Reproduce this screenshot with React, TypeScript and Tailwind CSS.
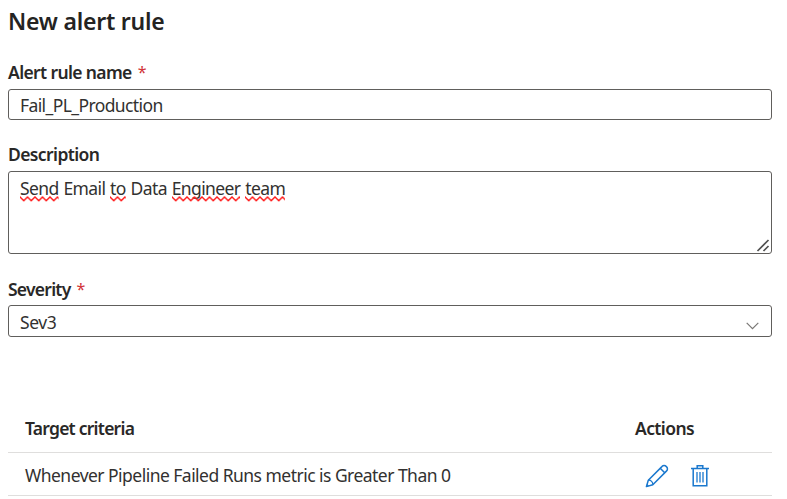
import React from "react";

function Squiggle({ text, className = "" }: { text: string; className?: string }) {
  const id = "wave-" + text;
  return (
    <span className={"relative inline-block " + className}>
      {text}
      <svg className="absolute left-0 top-[20px] h-[6px] w-full" aria-hidden="true">
        <defs>
          <pattern id={id} width="7.5" height="6" patternUnits="userSpaceOnUse">
            <path d="M-1 0 L0 1 L3.75 4.7 L7.5 1 L8.5 0" fill="none" stroke="#ff1a1a" strokeWidth="1.5" />
          </pattern>
        </defs>
        <rect width="100%" height="6" fill={`url(#${id})`} />
      </svg>
    </span>
  );
}

function Label({ text, required, className }: { text: string; required?: boolean; className: string }) {
  return (
    <div className="flex h-6 items-center whitespace-pre pb-[2px] font-semibold text-[#292827]">
      <span className={className}>{text}</span>
      {required && <span className="ml-[6px] text-[16px] font-normal text-[#d13438]">*</span>}
    </div>
  );
}

function PencilIcon() {
  return (
    <svg width="24" height="24" viewBox="0 0 24 24" fill="none" stroke="#1a78ce" strokeWidth="1.5" strokeLinejoin="round">
      <path d="M1.4 22.6 L3.3 16.2 L16.9 2.6 C18.2 1.2 20 1.2 21.4 2.6 C22.8 4 22.8 5.8 21.4 7.1 L7.8 20.7 Z" />
      <path d="M15.2 4.3 L19.7 8.8" />
      <path d="M3.3 16.2 C5.8 15.9 8.1 18.2 7.8 20.7 M1.9 20.5 L3.5 22.1" strokeWidth="1.3" />
    </svg>
  );
}

function TrashIcon() {
  return (
    <svg width="18" height="22" viewBox="0 0 18 22" fill="none" stroke="#1a78ce" strokeWidth="1.5">
      <path d="M0 3.5 H18 M2.2 3.5 V20.7 H15.8 V3.5 M6.2 3.5 V.8 H11.8 V3.5" />
      <path d="M6 7 V17.5 M9 7 V17.5 M12 7 V17.5" strokeWidth="1.3" />
    </svg>
  );
}

export default function App() {
  return (
    <main className="h-[499px] w-[787px] overflow-hidden whitespace-nowrap bg-white pl-2 pr-[15px] font-['Noto_Sans','Open_Sans',sans-serif] text-[17.5px] text-[#323130]">
      <h1 className="flex h-[42px] items-center text-[23px] font-semibold tracking-[-0.22px] text-[#242322]">New alert rule</h1>
      <section className="pt-[19px]">
        <Label text="Alert rule name" required className="tracking-[-0.63px]" />
        <div className="mt-1 flex h-[31px] items-center rounded-[3px] border border-[#605e5c] px-[11px] pt-[2px] tracking-[-0.6px]">
          Fail_PL_Production
        </div>
      </section>
      <section className="pt-[23px]">
        <Label text="Description" className="tracking-[-0.6px]" />
        <div className="relative mt-1 h-[83px] rounded-[3px] border border-[#605e5c] px-[11px] pt-1 leading-6 tracking-[-0.6px] [word-spacing:0.8px]">
          <Squiggle text="Send" /> Email <Squiggle text="to" /> Data <Squiggle text="Engineer" /> <Squiggle text="team" />
          <svg className="absolute bottom-0 right-0" width="16" height="15" viewBox="0 0 16 15" fill="none" stroke="#505050" strokeWidth="1.7">
            <path d="M2.5 13 L13.5 2 M8.5 13 L13.5 8" />
          </svg>
        </div>
      </section>
      <section className="pt-6">
        <Label text="Severity" required className="tracking-[-0.75px]" />
        <div className="mt-[3px] flex h-8 items-center justify-between rounded-[3px] border border-[#605e5c] pl-[11px] pr-3 pt-[3px] tracking-[-0.4px]">
          Sev3
          <svg className="mt-[7px]" width="13" height="8" viewBox="0 0 13 8" fill="none" stroke="#797775" strokeWidth="1.2">
            <path d="M.7 .9 L6.5 6.7 L12.3 .9" />
          </svg>
        </div>
      </section>
      <section className="mt-[68px]">
        <div className="flex h-12 items-center border-b border-[#dfdedd] pl-[17px] font-semibold text-[#292827]">
          <span className="w-[610px] tracking-[-0.76px]">Target criteria</span>
          <span className="tracking-[-0.6px]">Actions</span>
        </div>
        <div className="flex h-[43px] items-center border-b border-[#dfdedd] pl-[17px] pt-1">
          <span className="w-[620px] pb-[2px] tracking-[-0.53px]">Whenever Pipeline Failed Runs metric is Greater Than 0</span>
          <PencilIcon />
          <span className="ml-[22px]"><TrashIcon /></span>
        </div>
      </section>
    </main>
  );
}
